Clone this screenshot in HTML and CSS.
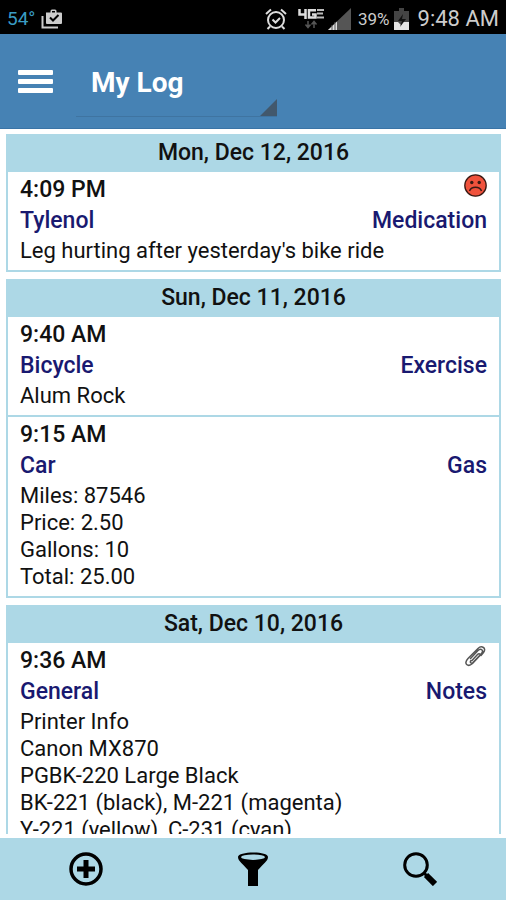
FILE: index.html
```html
<!DOCTYPE html>
<html lang="en">
<head>
<meta charset="utf-8">
<meta name="viewport" content="width=device-width, initial-scale=1">
<title>My Log</title>
<link rel="stylesheet" href="styles.css">
</head>
<body>
<div class="status">
  <span class="temp">54°</span>
  <svg class="clip-icon" width="22" height="22" viewBox="0 0 22 22" aria-hidden="true">
    <path d="M1.500 8V19.500H17" fill="none" stroke="#ccc" stroke-width="2"/>
    <path d="M5 4.500h4.500V3a1.500 1.500 0 0 1 1.500-1.500h3a1.500 1.500 0 0 1 1.500 1.500v1.500H20a1 1 0 0 1 1 1V15a1 1 0 0 1-1 1H6a1 1 0 0 1-1-1z" fill="#ccc"/>
    <path d="M11 3h3v1.500h-3z" fill="#000"/>
    <path d="M9 9.500l3 3 5.500-5.500" fill="none" stroke="#000" stroke-width="2"/>
  </svg>
  <span class="spacer"></span>
  <svg class="alarm" width="22" height="22" viewBox="0 0 22 22" aria-hidden="true">
    <g fill="none" stroke="#ddd" stroke-width="2">
      <circle cx="11" cy="12" r="8"/>
      <path d="M1 6L6 1.500M21 6L16 1.500M5 18.500L2.500 21M17 18.500L19.500 21M7.500 11.500l3 3L15 10"/>
    </g>
  </svg>
  <svg class="network" width="28" height="24" viewBox="0 0 28 24" aria-hidden="true">
    <g fill="none" stroke="#ddd" stroke-width="2.500">
      <path d="M2.500 2v5.500H9M8.500 2v10M19 3.200h-7v7.300h6.500V7.500H15"/>
    </g>
    <path d="M20 3h7M20 6.500h6M20 10.500h7" stroke="#bbb" stroke-width="2"/>
    <path d="M11 14v6M8.500 17.500l2.500 3 2.500-3M17 21v-6M14.500 17.500l2.500-3 2.500 3" fill="none" stroke="#555" stroke-width="1.500"/>
  </svg>
  <svg class="signal" width="23" height="24" viewBox="0 0 23 24" aria-hidden="true">
    <path d="M0 23L23 1v22z" fill="#555"/>
    <path d="M0 23l9-8.500V23z" fill="#ddd"/>
    <path d="M4 18v5M7 15v8" stroke="#555" stroke-width="1"/>
  </svg>
  <span class="percent">39%</span>
  <svg class="battery" width="15" height="24" viewBox="0 0 15 24" aria-hidden="true">
    <path d="M5 1h5v3h5v19H0V4h5z" fill="#444"/>
    <path d="M0 15h4l3 3 2-3h6v8H0z" fill="#e4e4e4"/>
    <path d="M9 7l-5 7h4l-2 6 6-8H8z" fill="#111"/>
  </svg>
  <span class="clock">9:48 AM</span>
</div>

<header class="appbar">
  <button class="menu" type="button" aria-label="Menu"><span></span><span></span><span></span></button>
  <div class="picker">
    <select class="picker-select" aria-label="Log"><option>My Log</option></select>
  </div>
</header>

<main class="log">
  <section class="day">
    <h2 class="date">Mon, Dec 12, 2016</h2>
    <article class="entry">
      <div class="row time"><span>4:09 PM</span>
        <svg class="mark" width="23" height="23" viewBox="0 0 23 23" role="img" aria-label="Unhappy">
          <circle cx="11.500" cy="11.500" r="10.700" fill="#f0523c" stroke="#3a1a14" stroke-width="1.300"/>
          <circle cx="7.800" cy="8.500" r="1.700" fill="#3a1a14"/><circle cx="15.200" cy="8.500" r="1.700" fill="#3a1a14"/>
          <path d="M5.500 17c2-5 10-5 12 0" fill="none" stroke="#3a1a14" stroke-width="1.500"/>
        </svg>
      </div>
      <div class="row subject"><span>Tylenol</span><span>Medication</span></div>
      <p class="note">Leg hurting after yesterday's bike ride</p>
    </article>
  </section>

  <section class="day">
    <h2 class="date">Sun, Dec 11, 2016</h2>
    <article class="entry">
      <div class="row time"><span>9:40 AM</span></div>
      <div class="row subject"><span>Bicycle</span><span>Exercise</span></div>
      <p class="note">Alum Rock</p>
    </article>
    <article class="entry">
      <div class="row time"><span>9:15 AM</span></div>
      <div class="row subject"><span>Car</span><span>Gas</span></div>
      <p class="note">Miles: 87546<br>Price: 2.50<br>Gallons: 10<br>Total: 25.00</p>
    </article>
  </section>

  <section class="day">
    <h2 class="date">Sat, Dec 10, 2016</h2>
    <article class="entry">
      <div class="row time"><span>9:36 AM</span>
        <svg class="mark" width="23" height="23" viewBox="0 0 23 23" role="img" aria-label="Attachment">
          <path d="M6.500 13.500L14 5.500c3-3 6 0 3.500 3L9 17.500c-1.800 1.500-3.500 0-2-2M17 10.500l2.500-3c3.500-4.500-2-7.500-5.500-4L4 13.500c-5 5.500 0 9 4.500 5L15.500 11c1.500-2-.5-3-2-1.500L8 15.500" fill="none" stroke="#555" stroke-width="1.500" stroke-linecap="round"/>
        </svg>
      </div>
      <div class="row subject"><span>General</span><span>Notes</span></div>
      <p class="note">Printer Info<br>Canon MX870<br>PGBK-220 Large Black<br>BK-221 (black), M-221 (magenta)<br>Y-221 (yellow), C-231 (cyan)</p>
    </article>
  </section>
</main>

<nav class="toolbar">
  <button type="button" aria-label="Add entry">
    <svg width="34" height="34" viewBox="0 0 34 34" aria-hidden="true">
      <circle cx="17" cy="17" r="15" fill="none" stroke="#000" stroke-width="3.500"/>
      <path d="M17 8v18M8 17h18" stroke="#000" stroke-width="5"/>
    </svg>
  </button>
  <button type="button" aria-label="Filter">
    <svg width="34" height="34" viewBox="0 0 34 34" aria-hidden="true">
      <path d="M2 5C2 -1 32 -1 32 5C32 9 27 12 22 18V34H12V18C7 12 2 9 2 5z"/>
      <ellipse cx="17" cy="5.200" rx="12" ry="2.700" fill="#add8e6"/>
    </svg>
  </button>
  <button type="button" aria-label="Search">
    <svg width="34" height="34" viewBox="0 0 34 34" aria-hidden="true">
      <circle cx="13" cy="13" r="11.300" fill="none" stroke="#000" stroke-width="3"/>
      <path d="M20.500 20.500l4 4" stroke="#000" stroke-width="3"/>
      <path d="M23 23l9 9" stroke="#000" stroke-width="6"/>
    </svg>
  </button>
</nav>
</body>
</html>
```
FILE: styles.css
```css
* { box-sizing: border-box; }

body {
  margin: 0;
  height: 100vh;
  display: flex;
  flex-direction: column;
  overflow: hidden;
  background: #fff;
  color: #111;
  font-family: Roboto, "Liberation Sans", sans-serif;
  font-size: 22px;
}

button, select { border: 0; padding: 0; background: none; color: inherit; font: inherit; }
svg { display: block; flex: none; }

.status {
  display: flex;
  align-items: center;
  flex: none;
  height: 34px;
  padding: 3px 7px 0;
  background: #000;
  color: #ccc;
}
.temp { color: #3a9cc4; font: 19px "Liberation Sans Narrow", Roboto, sans-serif; margin-right: 6px; }
.spacer { flex: 1; }
.network { margin-left: 10px; }
.signal { margin-left: 3px; }
.percent { margin-left: 7px; font-size: 17px; }
.battery { margin-left: 4px; }
.clock { margin-left: 9px; font-size: 22px; }

.appbar {
  display: flex;
  align-items: center;
  flex: none;
  height: 95px;
  padding: 0 18px;
  background: #4682b4;
  color: #fff;
  border-bottom: 1px solid #3a74a6;
}
.menu { display: grid; gap: 4px; width: 35px; }
.menu span { height: 5px; border-radius: 1px; background: #fff; }
.picker {
  position: relative;
  width: 201px;
  margin-left: 23px;
  border-bottom: 1px solid #3f74a1;
}
.picker::after {
  content: "";
  position: absolute;
  right: 0;
  bottom: 0;
  border-left: 17px solid transparent;
  border-bottom: 17px solid #42586c;
}
.picker-select {
  appearance: none;
  width: 100%;
  height: 70px;
  padding: 4px 15px 0;
  font-size: 28px;
  font-weight: 700;
}

.log {
  flex: 1;
  min-height: 0;
  overflow: hidden;
  margin: 5px 5px 4px 6px;
}
.day {
  margin-bottom: 7px;
  border: 2px solid #add8e6;
  border-top: 0;
}
.date {
  margin: 0;
  background: #add8e6;
  font-size: 23px;
  font-weight: 500;
  line-height: 38px;
  text-align: center;
}
.entry { padding: 2px 12px 6px; }
.entry + .entry { border-top: 2px solid #add8e6; }
.row {
  display: flex;
  justify-content: space-between;
  font-size: 23px;
  font-weight: 500;
  line-height: 31px;
}
.subject { color: #191970; }
.note { margin: 1px 0 0; line-height: 27px; }

.toolbar {
  display: grid;
  grid-template-columns: repeat(3, 1fr);
  flex: none;
  height: 62px;
  padding: 0 3px;
  background: #add8e6;
}
.toolbar button { display: grid; place-items: center; }
```
